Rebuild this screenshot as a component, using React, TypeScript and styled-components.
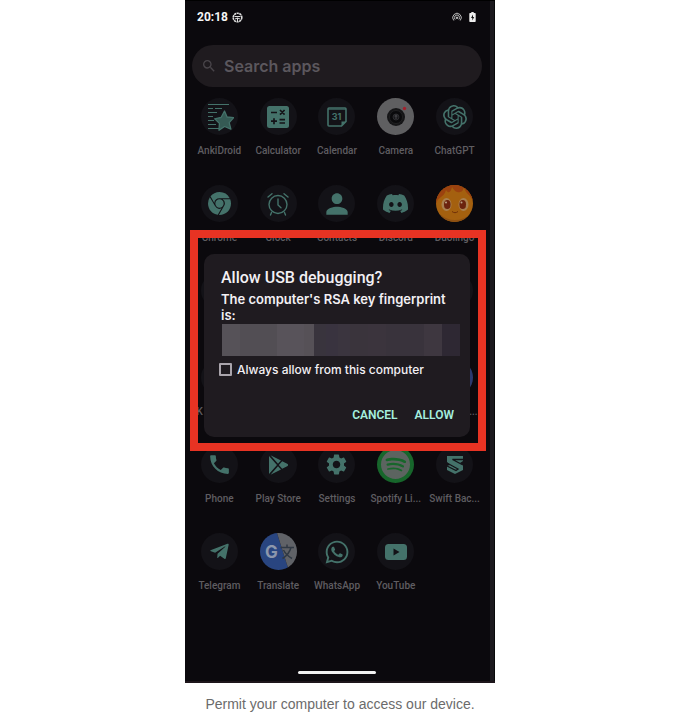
import React from "react";
import styled, { createGlobalStyle } from "styled-components";
import { SiOpenai, SiGooglechrome, SiDiscord, SiSpotify } from "react-icons/si";
import { FaTelegramPlane, FaWhatsapp } from "react-icons/fa";
import { MdPhone, MdSettings, MdPerson, MdSearch } from "react-icons/md";

const TEAL = "#44726a";
const TILE = "#131217";

const GlobalStyle = createGlobalStyle`
  *, *::before, *::after { box-sizing: border-box; }
  body {
    margin: 0;
    background: #fff;
    font-family: Inter, Roboto, "Liberation Sans", sans-serif;
  }
`;

const Figure = styled.figure`
  margin: 0;
  display: flex;
  flex-direction: column;
  align-items: center;
`;

const Caption = styled.figcaption`
  padding: 11px 8px 0;
  color: #6b6b6b;
  font-family: "Liberation Sans", sans-serif;
  font-size: 14px;
  line-height: 20px;
  text-align: center;
`;

const Phone = styled.div`
  position: relative;
  width: 100%;
  max-width: 310px;
  background: #0b090d;
  border-top: 1px solid #000;
  border-bottom: 2px solid #1d151b;
  box-shadow: inset -1px 0 #08090a, inset -5px 0 #1b191e;
`;

const StatusBar = styled.header`
  display: flex;
  align-items: center;
  justify-content: space-between;
  height: 32px;
  padding: 0 19px 0 12px;
  color: #f5f5f5;
`;

const StatusGroup = styled.div<{ $gap: number }>`
  display: flex;
  align-items: center;
  gap: ${(p) => p.$gap}px;
  font-family: Roboto, sans-serif;
  font-size: 12px;
  font-weight: 700;
`;

const SearchBar = styled.label`
  display: flex;
  align-items: center;
  gap: 7px;
  height: 42px;
  margin: 12px 13px 0 7px;
  padding: 0 10px 0 9px;
  border-radius: 21px;
  background: #1f1b1f;
  color: #49454a;
`;

const SearchInput = styled.input`
  flex: 1;
  min-width: 0;
  padding: 0;
  border: 0;
  outline: 0;
  background: transparent;
  color: #5b575d;
  font-family: inherit;
  font-size: 16px;
  font-weight: 600;
  &::placeholder { color: #5b575d; opacity: 1; }
`;

const AppGrid = styled.main`
  display: grid;
  grid-template-columns: repeat(5, minmax(0, 1fr));
  grid-template-rows: repeat(6, 87px);
  margin: 11px 11px 0 5px;
`;

const AppTile = styled.a`
  display: flex;
  flex-direction: column;
  align-items: center;
  gap: 9px;
  color: #5f5d61;
  font-family: Roboto, sans-serif;
  font-size: 10px;
  font-weight: 500;
  line-height: 14px;
  white-space: nowrap;
  text-decoration: none;
`;

const AppLabel = styled.span<{ $align?: string }>`
  min-width: 46px;
  text-align: ${(p) => p.$align ?? "center"};
`;

const Disc = styled.span<{ $bg?: string }>`
  display: grid;
  place-items: center;
  width: 37px;
  height: 37px;
  border-radius: 50%;
  overflow: hidden;
  background: ${(p) => p.$bg ?? TILE};
  color: ${TEAL};
`;

const HomeArea = styled.div`
  display: flex;
  justify-content: center;
  padding: 51px 8px 7px 2px;
`;

const HomeHandle = styled.div`
  width: 78px;
  height: 3px;
  border-radius: 2px;
  background: #f1f1f1;
`;

const Highlight = styled.div`
  position: absolute;
  top: 229px;
  left: 5px;
  right: 9px;
  padding: 16px 8px 6px 6px;
  border: 8px solid #e73323;
`;

const Dialog = styled.section`
  padding: 14px 10px 11px 15px;
  border-radius: 10px;
  background: #1f1b20;
  color: #f3f0f4;
`;

const Title = styled.h1`
  margin: 0 0 3px;
  padding-left: 2px;
  font-family: Roboto, sans-serif;
  font-size: 16px;
  font-weight: 500;
  line-height: 20px;
`;

const Message = styled.p`
  margin: 0;
  padding-left: 2px;
  font-size: 13px;
  font-weight: 600;
  line-height: 16px;
`;

const Redacted = styled.div`
  display: flex;
  height: 32px;
  margin: 1px 0 5px 3px;
`;

const Block = styled.span<{ $w: number; $c: string }>`
  flex: ${(p) => p.$w} 1 0;
  background: ${(p) => p.$c};
`;

const CheckRow = styled.label`
  display: flex;
  align-items: center;
  gap: 5px;
  height: 16px;
  font-size: 12px;
  font-weight: 500;
  white-space: nowrap;
`;

const CheckBox = styled.input`
  appearance: none;
  flex: none;
  width: 13px;
  height: 13px;
  margin: 0;
  border: 2px solid #aaa5ac;
  border-radius: 1px;
`;

const Actions = styled.div`
  display: flex;
  justify-content: flex-end;
  gap: 17px;
  padding: 27px 6px 0 0;
`;

const Action = styled.button`
  padding: 0;
  border: 0;
  background: transparent;
  color: #a5efdf;
  font-family: Roboto, sans-serif;
  font-size: 12px;
  font-weight: 600;
  line-height: 22px;
  cursor: pointer;
`;

const AnkiIcon = () => (
  <svg width="30" height="30" viewBox="0 0 30 30" fill="none" stroke={TEAL}>
    <path d="M4 2.500h21M4 6.500h5M11 6.500h7M4 10.500h9M4 14.500h5M4 18.500h6M4 22.500h8M4 26.500h11" strokeWidth="1.100" />
    <path d="m20.500 9 2.600 6 6.600.6-4.500 5 1.700 6.600-6.300-2.700-5.600 3.700.4-6.800-4.700-4.600 6.500-1.500z" fill="#355a54" strokeWidth="1.300" strokeLinejoin="round" />
  </svg>
);

const CalculatorIcon = () => (
  <svg width="24" height="24" viewBox="0 0 24 24">
    <rect x="1" y="1" width="22" height="22" rx="2.500" fill={TEAL} />
    <path d="M5 7.500h6M5 16.200h6M8 13.200v6M14 5l4.600 4.600M18.600 5 14 9.600M13.500 14.700h5.500M13.500 18h5.500" stroke={TILE} strokeWidth="1.700" />
  </svg>
);

const CalendarIcon = () => (
  <svg width="22" height="22" viewBox="0 0 22 22">
    <path d="M3 2h16a1 1 0 0 1 1 1v12.500L15.500 20H3a1 1 0 0 1-1-1V3a1 1 0 0 1 1-1z" fill="none" stroke={TEAL} strokeWidth="1.600" />
    <path d="M2 3.200h18" fill="none" stroke={TEAL} strokeWidth="1" />
    <path d="M15.500 20v-4.500H20z" fill={TEAL} />
    <text x="10.500" y="14" textAnchor="middle" fontSize="9" fontWeight="700" fontFamily="Inter, sans-serif" fill={TEAL}>31</text>
  </svg>
);

const CameraIcon = () => (
  <svg width="38" height="38" viewBox="0 0 38 38">
    <circle cx="19" cy="19" r="9" fill="#151517" />
    <circle cx="19" cy="19" r="6.500" fill="#0a0a0c" stroke="#242426" strokeWidth=".8" />
    <circle cx="19" cy="19" r="3" fill="#19191c" stroke="#38383b" strokeWidth=".7" />
    <path d="M19 16.500v4.500M17.500 18h3" stroke="#5a5a5d" strokeWidth=".7" />
    <circle cx="27.500" cy="10.500" r="1.700" fill="#a3212d" />
  </svg>
);

const ClockIcon = () => (
  <svg width="24" height="24" viewBox="0 0 24 24" fill="none" stroke={TEAL} strokeWidth="1.400" strokeLinecap="round">
    <circle cx="12" cy="12.500" r="9" />
    <path d="M12 7v6l3 2.800M2 5l4-3.300M22 5l-4-3.300M5.500 20.500 4.500 23M18.500 20.500l1 2.500" />
  </svg>
);

const DuolingoIcon = () => (
  <svg width="38" height="38" viewBox="0 0 38 38">
    <path d="M0 19C2 11 8 13 10 5c3 5 5 1 6-3 3 5 6 6 8 5 3 0 3-3 4-5 1 7 8 8 10 17V0H0z" fill="#9b420f" />
    <path d="M4 29c8 8 22 8 30 0-3 6-8 9-15 9S7 35 4 29z" fill="#8e5012" />
    <ellipse cx="10.500" cy="19.500" rx="5" ry="6.500" fill="#a98050" />
    <ellipse cx="27.500" cy="19.500" rx="5" ry="6.500" fill="#a98050" />
    <ellipse cx="11.300" cy="19.500" rx="3.300" ry="4.600" fill="#6b230e" />
    <ellipse cx="26.700" cy="19.500" rx="3.300" ry="4.600" fill="#6b230e" />
    <circle cx="10" cy="17.500" r="1" fill="#bba287" />
    <circle cx="25.500" cy="17.500" r="1" fill="#bba287" />
    <path d="M16 26.500c2 1.600 4 1.600 6 0" fill="none" stroke="#703008" strokeWidth="1" />
  </svg>
);

const PlayIcon = () => (
  <svg width="22" height="24" viewBox="0 0 22 24" fill={TEAL}>
    <path d="M2 3v18l8-9zM3.500 2.200 11 10.800l3-3.300zM3.500 21.800 11 13.200l3 3.300zM15.200 8.200 11.800 12l3.400 3.800 5-2.500c1.200-.7 1.200-1.900 0-2.600z" />
  </svg>
);

const SwiftIcon = () => (
  <svg width="18" height="20" viewBox="0 0 18 20">
    <path d="M1 1h16v5l-3 2 3 2v5l-8 4-8-4v-4l3-1-3-3z" fill={TEAL} />
    <path d="M17 4.500H6.500L17 10M1 8l11 6-2 1.500-9-4.500" fill="none" stroke={TILE} strokeWidth="1.300" />
  </svg>
);

const TranslateIcon = () => (
  <svg width="38" height="38" viewBox="0 0 38 38">
    <path d="M0 0h17l12 38H0z" fill="#294580" />
    <path d="M17 0h21v38h-9z" fill="#606267" />
    <text x="5" y="25" fontSize="17" fontWeight="700" fontFamily="Inter, sans-serif" fill="#8d97ac">G</text>
    <path d="M20.500 14.500H34M27 11.500v3M31 14.500c-1.500 5.500-4.500 8.500-8.500 11M23.500 17c2 4 5 6.500 8.500 8.500" fill="none" stroke="#303944" strokeWidth="1.500" />
  </svg>
);

const YouTubeIcon = () => (
  <svg width="24" height="18" viewBox="0 0 24 18">
    <rect x="1" y="1" width="22" height="16" rx="3.500" fill={TEAL} />
    <path d="m9.500 5.500 6 3.500-6 3.500z" fill={TILE} />
  </svg>
);

const BadgeIcon = () => (
  <svg width="11" height="11" viewBox="0 0 11 11" fill="none" stroke="#ddd">
    <circle cx="5.500" cy="5.500" r="4.300" strokeWidth="1.600" strokeDasharray="2.200 .5" />
    <path d="M2.500 4.500h6M5.500 6v3M3 7l2.500-1L8 7" strokeWidth="1" />
  </svg>
);

const HotspotIcon = () => (
  <svg width="10" height="10" viewBox="0 0 10 10" fill="none" stroke="#ccc" strokeWidth=".9">
    <path d="M1.800 8.500a4.300 4.300 0 1 1 6.400 0M3.200 7.500a2.600 2.600 0 1 1 3.600 0" />
    <circle cx="5" cy="5.800" r=".8" fill="#ccc" />
  </svg>
);

const BatteryIcon = () => (
  <svg width="7" height="10" viewBox="0 0 7 10">
    <path d="M2.300 0h2.400v1h1.300q.7 0 .7.700v7.600q0 .7-.7.700H1q-.7 0-.7-.7V1.700Q.3 1 1 1h1.300z" fill="#eee" />
    <path d="M4 2.500 2 6h1.300v2.500L5.200 5H4z" fill="#111" />
  </svg>
);

type App = { name: string; icon?: React.ReactNode; bg?: string; align?: string };

const apps: App[] = [
  { name: "AnkiDroid", icon: <AnkiIcon /> },
  { name: "Calculator", icon: <CalculatorIcon /> },
  { name: "Calendar", icon: <CalendarIcon /> },
  { name: "Camera", icon: <CameraIcon />, bg: "#5f5f61" },
  { name: "ChatGPT", icon: <SiOpenai size={24} /> },
  { name: "Chrome", icon: <SiGooglechrome size={23} /> },
  { name: "Clock", icon: <ClockIcon /> },
  { name: "Contacts", icon: <MdPerson size={32} /> },
  { name: "Discord", icon: <SiDiscord size={25} /> },
  { name: "Duolingo", icon: <DuolingoIcon />, bg: "#a4600f" },
  { name: "" },
  { name: "" },
  { name: "" },
  { name: "" },
  { name: "" },
  { name: "K", align: "left" },
  { name: "" },
  { name: "" },
  { name: "" },
  { name: "...", align: "right", bg: "#2b3a70" },
  { name: "Phone", icon: <MdPhone size={25} /> },
  { name: "Play Store", icon: <PlayIcon /> },
  { name: "Settings", icon: <MdSettings size={25} /> },
  { name: "Spotify Li...", icon: <SiSpotify size={29} color="#5c6460" />, bg: "#17662b" },
  { name: "Swift Bac...", icon: <SwiftIcon /> },
  { name: "Telegram", icon: <FaTelegramPlane size={21} /> },
  { name: "Translate", icon: <TranslateIcon /> },
  { name: "WhatsApp", icon: <FaWhatsapp size={26} /> },
  { name: "YouTube", icon: <YouTubeIcon /> },
];

const blocks = [
  { w: 18, c: "#565258" },
  { w: 37, c: "#524e54" },
  { w: 27, c: "#58535a" },
  { w: 10, c: "#565157" },
  { w: 12, c: "#39343d" },
  { w: 12, c: "#39333f" },
  { w: 12, c: "#3b353f" },
  { w: 18, c: "#3a343c" },
  { w: 18, c: "#3b343d" },
  { w: 38, c: "#39333c" },
  { w: 18, c: "#3e3740" },
  { w: 18, c: "#2e2833" },
];

export default function App() {
  return (
    <>
      <GlobalStyle />
      <Figure>
        <Phone>
          <StatusBar>
            <StatusGroup $gap={4}>
              <span>20:18</span>
              <BadgeIcon />
            </StatusGroup>
            <StatusGroup $gap={7}>
              <HotspotIcon />
              <BatteryIcon />
            </StatusGroup>
          </StatusBar>
          <SearchBar>
            <MdSearch size={16} />
            <SearchInput type="text" placeholder="Search apps" aria-label="Search apps" />
          </SearchBar>
          <AppGrid>
            {apps.map((app, i) => (
              <AppTile key={i} href="#">
                <Disc $bg={app.bg}>{app.icon}</Disc>
                <AppLabel $align={app.align}>{app.name}</AppLabel>
              </AppTile>
            ))}
          </AppGrid>
          <HomeArea>
            <HomeHandle />
          </HomeArea>
          <Highlight>
            <Dialog role="dialog" aria-labelledby="dialog-title">
              <Title id="dialog-title">Allow USB debugging?</Title>
              <Message>The computer's RSA key fingerprint is:</Message>
              <Redacted>
                {blocks.map((b, i) => (
                  <Block key={i} $w={b.w} $c={b.c} />
                ))}
              </Redacted>
              <CheckRow>
                <CheckBox type="checkbox" />
                Always allow from this computer
              </CheckRow>
              <Actions>
                <Action type="button">CANCEL</Action>
                <Action type="button">ALLOW</Action>
              </Actions>
            </Dialog>
          </Highlight>
        </Phone>
        <Caption>Permit your computer to access our device.</Caption>
      </Figure>
    </>
  );
}
